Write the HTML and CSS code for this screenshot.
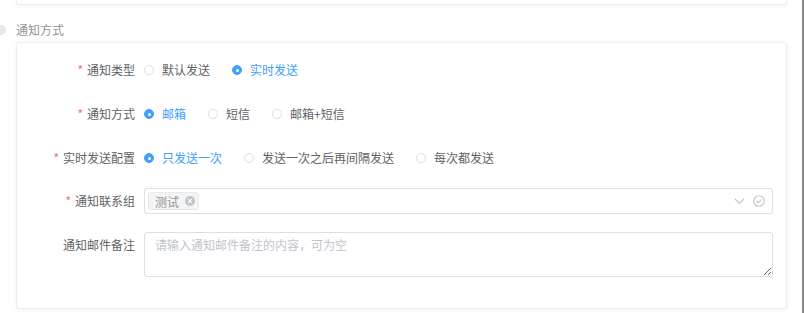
FILE: index.html
```html
<!DOCTYPE html>
<html>
<head>
  <title>通知方式</title>
  <link rel="stylesheet" href="styles.css">
</head>
<body>
  <div class="page">
    <div class="card card-top"></div>

    <div class="section-title">
      <span class="dot"></span>
      <span>通知方式</span>
    </div>

    <div class="card card-form">
      <div class="form-item">
        <label class="form-label"><span class="req">*</span>通知类型</label>
        <div class="form-control">
          <span class="radio"><span class="radio-inner"></span>默认发送</span>
          <span class="radio checked"><span class="radio-inner"></span>实时发送</span>
        </div>
      </div>

      <div class="form-item">
        <label class="form-label"><span class="req">*</span>通知方式</label>
        <div class="form-control">
          <span class="radio checked"><span class="radio-inner"></span>邮箱</span>
          <span class="radio"><span class="radio-inner"></span>短信</span>
          <span class="radio"><span class="radio-inner"></span>邮箱+短信</span>
        </div>
      </div>

      <div class="form-item">
        <label class="form-label"><span class="req">*</span>实时发送配置</label>
        <div class="form-control">
          <span class="radio checked"><span class="radio-inner"></span>只发送一次</span>
          <span class="radio"><span class="radio-inner"></span>发送一次之后再间隔发送</span>
          <span class="radio"><span class="radio-inner"></span>每次都发送</span>
        </div>
      </div>

      <div class="form-item">
        <label class="form-label"><span class="req">*</span>通知联系组</label>
        <div class="form-control">
          <div class="select">
            <span class="tag">测试<span class="tag-close">
              <svg width="10" height="10" viewBox="0 0 10 10"><circle cx="5" cy="5" r="5" fill="#c0c4cc"/><path d="M3.2 3.2 L6.8 6.8 M6.8 3.2 L3.2 6.8" stroke="#fff" stroke-width="1.2"/></svg>
            </span></span>
            <span class="select-icons">
              <svg width="11" height="7" viewBox="0 0 11 7"><path d="M1 1 L5.5 5.5 L10 1" fill="none" stroke="#c0c4cc" stroke-width="1.1"/></svg>
              <svg width="12" height="12" viewBox="0 0 12 12"><circle cx="6" cy="6" r="5.3" fill="none" stroke="#c0c4cc" stroke-width="1.1"/><path d="M3.5 6.2 L5.3 8 L8.6 4.4" fill="none" stroke="#c0c4cc" stroke-width="1.1"/></svg>
            </span>
          </div>
        </div>
      </div>

      <div class="form-item">
        <label class="form-label">通知邮件备注</label>
        <div class="form-control">
          <textarea class="textarea" placeholder="请输入通知邮件备注的内容，可为空"></textarea>
        </div>
      </div>
    </div>
  </div>
  <div class="scroll-edge"></div>
</body>
</html>
```

FILE: styles.css
```css
html, body {
  margin: 0;
  padding: 0;
  background-color: #fff;
  font-family: "Noto Sans CJK SC", "Noto Sans", sans-serif;
  font-size: 12px;
  color: #606266;
  overflow: hidden;
}

.page {
  width: 804px;
  height: 313px;
  box-sizing: border-box;
  padding: 0 17px 0 16px;
}

.scroll-edge {
  position: absolute;
  top: 0;
  left: 802px;
  width: 2px;
  height: 313px;
  background-color: #8a8a8a;
}

.card {
  background-color: #fff;
  border: 1px solid #ebeef5;
  border-radius: 3px;
  box-shadow: 0 1px 6px rgba(0, 0, 0, 0.05);
}

.card-top {
  height: 5px;
  margin-top: -1px;
  border-top: none;
  border-radius: 0 0 3px 3px;
}

.section-title {
  position: relative;
  height: 37px;
  line-height: 50px;
  font-size: 12px;
  color: #909399;
}

.dot {
  position: absolute;
  left: -20px;
  top: 20px;
  width: 10px;
  height: 10px;
  border-radius: 50%;
  background-color: #e4e7ed;
}

.card-form {
  padding: 14px 13px 13px 0;
}

.form-item {
  display: flex;
  align-items: flex-start;
  margin-bottom: 18px;
}

.form-item:nth-child(3) {
  margin-bottom: 17px;
}

.form-label {
  width: 127px;
  box-sizing: border-box;
  padding-right: 9px;
  text-align: right;
  line-height: 26px;
  color: #606266;
}

.req {
  color: #f56c6c;
  margin-right: 4px;
}

.form-control {
  flex: 1;
  display: flex;
  align-items: center;
  min-height: 26px;
}

.radio {
  display: inline-flex;
  align-items: center;
  margin-right: 22px;
  line-height: 26px;
  white-space: nowrap;
}

.radio-inner {
  width: 8px;
  height: 8px;
  border: 1px solid #dcdfe6;
  border-radius: 50%;
  margin-right: 8px;
  margin-left: 0;
  position: relative;
  background-color: #fff;
}

.radio.checked {
  color: #409eff;
}

.radio.checked .radio-inner {
  border-color: #409eff;
  background-color: #409eff;
}

.radio.checked .radio-inner::after {
  content: "";
  position: absolute;
  left: 2.5px;
  top: 2.5px;
  width: 3px;
  height: 3px;
  border-radius: 50%;
  background-color: #fff;
}

.select {
  flex: 1;
  height: 26px;
  box-sizing: border-box;
  border: 1px solid #dcdfe6;
  border-radius: 3px;
  display: flex;
  align-items: center;
  padding-left: 3px;
  padding-right: 7px;
}

.tag {
  display: inline-flex;
  align-items: center;
  height: 18px;
  box-sizing: border-box;
  padding: 0 3px 0 6px;
  background-color: #f4f4f5;
  border: 1px solid #e9e9eb;
  border-radius: 3px;
  color: #909399;
  font-size: 12px;
}

.tag-close {
  display: inline-flex;
  margin-left: 6px;
}

.select-icons {
  margin-left: auto;
  display: flex;
  align-items: center;
  gap: 8px;
}

.textarea {
  flex: 1;
  height: 45px;
  box-sizing: border-box;
  border: 1px solid #dcdfe6;
  border-radius: 3px;
  padding: 3px 10px;
  font-family: "Noto Sans CJK SC", "Noto Sans", sans-serif;
  font-size: 12px;
  line-height: 18px;
  color: #606266;
  resize: vertical;
  margin: 0;
}

.textarea::placeholder {
  color: #c0c4cc;
}
```
